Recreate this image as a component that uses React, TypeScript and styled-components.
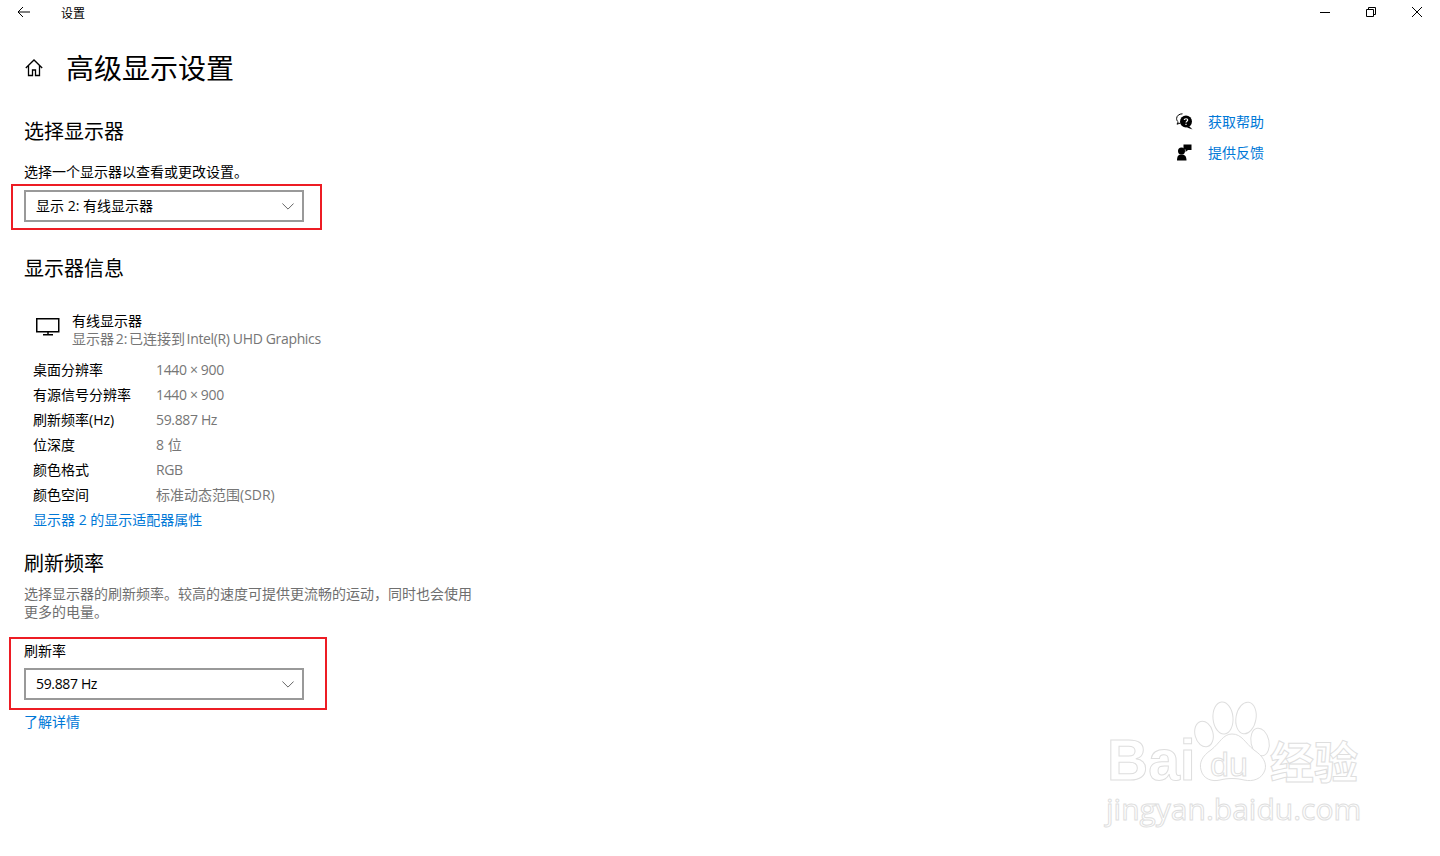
import React from 'react'
import styled, { createGlobalStyle } from 'styled-components'

const GlobalStyle = createGlobalStyle`
  html, body {
    margin: 0;
    padding: 0;
    background: #fff;
  }
  body {
    font-family: "Open Sans", "Noto Sans CJK SC", sans-serif;
    font-size: 14px;
    color: #000;
  }
`

const Page = styled.div`
  position: relative;
  width: 1440px;
  height: 856px;
  overflow: hidden;
  background: #fff;
`

const TitleBar = styled.div`
  display: flex;
  align-items: center;
  height: 24px;
`

const BackButton = styled.div`
  display: flex;
  align-items: center;
  justify-content: center;
  width: 48px;
  height: 24px;
`

const AppName = styled.span`
  flex: 1;
  margin-left: 13px;
  padding-top: 3px;
  font-size: 12px;
  line-height: 24px;
`

const WindowButton = styled.div`
  display: flex;
  align-items: center;
  justify-content: center;
  width: 46px;
  height: 24px;
`

const Content = styled.div`
  display: grid;
  grid-template-columns: 1176px 1fr;
`

const Main = styled.main`
  padding-left: 24px;
`

const TitleRow = styled.div`
  display: flex;
  align-items: center;
  margin-top: 24px;
  height: 40px;
`

const HomeIcon = styled.div`
  display: flex;
  width: 42px;
  padding-left: 1px;
  box-sizing: border-box;
`

const Title = styled.h1`
  margin: 0;
  font-size: 28px;
  line-height: 40px;
  font-weight: 400;
`

const Heading = styled.h2<{ $top: number }>`
  margin: ${(p) => p.$top}px 0 0;
  font-size: 20px;
  line-height: 28px;
  font-weight: 400;
`

const Text = styled.div<{ $top: number }>`
  margin-top: ${(p) => p.$top}px;
  line-height: 20px;
`

const Latin = styled.span`
  letter-spacing: -0.35px;
  word-spacing: 0;
`

const Paragraph = styled.p`
  margin: 7px 0 0;
  width: 456px;
  line-height: 18px;
  color: #6f6f6f;
`

const SelectBox = styled.div<{ $top: number }>`
  display: flex;
  align-items: center;
  justify-content: space-between;
  box-sizing: border-box;
  width: 280px;
  height: 32px;
  margin-top: ${(p) => p.$top}px;
  padding: 0 8px 2px 10px;
  border: 2px solid #999;
`

const Chevron = styled.svg`
  display: block;
  margin-top: 2px;
  color: #666;
`

const RedMark = styled.div<{ $l: number; $t: number; $w: number; $h: number }>`
  position: absolute;
  left: ${(p) => p.$l}px;
  top: ${(p) => p.$t}px;
  width: ${(p) => p.$w}px;
  height: ${(p) => p.$h}px;
  box-sizing: border-box;
  border: 2px solid #ed1c24;
  pointer-events: none;
`

const DeviceRow = styled.div`
  display: flex;
  margin-top: 29px;
  padding-left: 12px;
  line-height: 18px;
`

const DeviceIcon = styled.div`
  width: 36px;
  padding-top: 6px;
`

const Muted = styled.div`
  color: #767676;
  word-spacing: -2px;
`

const InfoList = styled.div`
  margin-top: 9px;
  padding-left: 9px;
`

const InfoRow = styled.div`
  display: grid;
  grid-template-columns: 123px 1fr;
  height: 25px;
  line-height: 25px;
`

const Value = styled.span`
  color: #767676;
`

const Link = styled.a<{ $top?: number }>`
  display: block;
  margin-top: ${(p) => p.$top ?? 0}px;
  color: #0078d7;
  line-height: 25px;
  text-decoration: none;
`

const Aside = styled.aside`
  display: flex;
  flex-direction: column;
  gap: 11px;
  padding-top: 87px;
`

const HelpRow = styled.div`
  display: flex;
  align-items: center;
  height: 20px;
  gap: 15px;
  color: #0078d7;
`

const Watermark = styled.div`
  position: absolute;
  left: 1104px;
  top: 698px;
  width: 262px;
  height: 130px;
  color: #fff;
  pointer-events: none;
  -webkit-text-stroke: 1px #dedede;
`

const Brand = styled.span`
  position: absolute;
  left: 3px;
  top: 32px;
  font-family: "Liberation Sans", sans-serif;
  font-size: 57px;
  font-weight: 700;
  line-height: 60px;
`

const BrandInner = styled.span`
  position: absolute;
  left: 106px;
  top: 50px;
  font-family: "Liberation Sans", sans-serif;
  font-size: 34px;
  line-height: 32px;
`

const BrandCn = styled.span`
  position: absolute;
  left: 166px;
  top: 32px;
  font-family: "Noto Sans CJK SC", sans-serif;
  font-size: 44px;
  font-weight: 700;
  line-height: 60px;
  white-space: nowrap;
`

const Domain = styled.span`
  position: absolute;
  left: 2px;
  top: 94px;
  font-family: "Open Sans", sans-serif;
  font-size: 30px;
  line-height: 34px;
  white-space: nowrap;
`

const Paw = styled.svg`
  position: absolute;
  left: 90px;
  top: 0;
`

const Ln = ({ d, w = 1 }: { d: string; w?: number }) => (
  <path d={d} fill="none" stroke="currentColor" strokeWidth={w} />
)

const Select = ({ top, children }: { top: number; children: React.ReactNode }) => (
  <SelectBox $top={top}>
    <span>{children}</span>
    <Chevron width="12" height="7" viewBox="0 0 12 7">
      <Ln d="M.400.500 6 6.100 11.600.500" />
    </Chevron>
  </SelectBox>
)

const rows: [string, React.ReactNode][] = [
  ['桌面分辨率', <Latin>1440 × 900</Latin>],
  ['有源信号分辨率', <Latin>1440 × 900</Latin>],
  ['刷新频率(Hz)', <Latin>59.887 Hz</Latin>],
  ['位深度', '8 位'],
  ['颜色格式', <Latin>RGB</Latin>],
  ['颜色空间', '标准动态范围(SDR)'],
]

export default function App() {
  return (
    <Page>
      <GlobalStyle />
      <TitleBar>
        <BackButton>
          <svg width="14" height="12" viewBox="0 0 14 12">
            <Ln d="M13 6H1M6 1 1 6l5 5" />
          </svg>
        </BackButton>
        <AppName>设置</AppName>
        <WindowButton>
          <svg width="10" height="10" viewBox="0 0 10 10">
            <Ln d="M0 5.500h10" />
          </svg>
        </WindowButton>
        <WindowButton>
          <svg width="10" height="10" viewBox="0 0 10 10">
            <Ln d="M.500 2.500h7v7h-7zM2.500 2.500v-2h7v7h-2" />
          </svg>
        </WindowButton>
        <WindowButton>
          <svg width="10" height="10" viewBox="0 0 10 10">
            <Ln d="M0 0l10 10M10 0 0 10" />
          </svg>
        </WindowButton>
      </TitleBar>
      <Content>
        <Main>
          <TitleRow>
            <HomeIcon>
              <svg width="18" height="18" viewBox="0 0 18 18">
                <Ln d="M.800 9 9 1 17.200 9M3.500 6.500v10h4V11h3v5.500h4v-10" w={1.3} />
              </svg>
            </HomeIcon>
            <Title>高级显示设置</Title>
          </TitleRow>
          <Heading $top={30}>选择显示器</Heading>
          <Text $top={16}>选择一个显示器以查看或更改设置。</Text>
          <Select top={8}>显示 2: 有线显示器</Select>
          <Heading $top={33}>显示器信息</Heading>
          <DeviceRow>
            <DeviceIcon>
              <svg width="24" height="18" viewBox="0 0 24 18">
                <Ln d="M.750.750h22v13h-22z" w={1.5} />
                <Ln d="M12 14v2.500M7 16.800h10" w={1.5} />
              </svg>
            </DeviceIcon>
            <div>
              <div>有线显示器</div>
              <Muted>
                显示器 2: 已连接到 <Latin>Intel(R) UHD Graphics</Latin>
              </Muted>
            </div>
          </DeviceRow>
          <InfoList>
            {rows.map(([k, v]) => (
              <InfoRow key={k}>
                <span>{k}</span>
                <Value>{v}</Value>
              </InfoRow>
            ))}
            <Link>显示器 2 的显示适配器属性</Link>
          </InfoList>
          <Heading $top={18}>刷新频率</Heading>
          <Paragraph>选择显示器的刷新频率。较高的速度可提供更流畅的运动，同时也会使用更多的电量。</Paragraph>
          <Text $top={20}>刷新率</Text>
          <Select top={7}>
            <Latin>59.887 Hz</Latin>
          </Select>
          <Link $top={9}>了解详情</Link>
        </Main>
        <Aside>
          <HelpRow>
            <svg width="17" height="17" viewBox="0 0 17 17">
              <path d="M6.500 .800C3.200 .800 .600 2.800 .600 5.600c0 1.400.600 2.500 1.600 3.300L1 11.200l3.500-1.200" fill="none" stroke="#000" />
              <circle cx="10" cy="8.500" r="6" fill="#000" />
              <path d="M13 13l3.500 3.500-5.500-2z" fill="#000" />
              <path d="M8.200 7c.2-1.700 3.500-1.700 3.500 0 0 1.200-1.700 1.200-1.700 2.600M10 10.800V12" fill="none" stroke="#fff" strokeWidth="1.200" />
            </svg>
            <span>获取帮助</span>
          </HelpRow>
          <HelpRow>
            <svg width="17" height="17" viewBox="0 0 17 17">
              <circle cx="5.500" cy="7" r="3.500" fill="#000" />
              <path d="M1 16.500c0-4.500 1.500-6 4.500-6s5 1.500 5 6z" fill="#000" />
              <path d="M7.500 .500h8v5.500h-3.500L9.500 8V5.500H7.500z" fill="#000" />
            </svg>
            <span>提供反馈</span>
          </HelpRow>
        </Aside>
      </Content>
      <RedMark $l={11} $t={184} $w={311} $h={46} />
      <RedMark $l={9} $t={637} $w={318} $h={73} />
      <Watermark>
        <Paw width="80" height="90" viewBox="0 0 80 90" fill="#fff" stroke="#dedede" strokeWidth="1">
          <ellipse cx="10" cy="36" rx="9" ry="13" transform="rotate(-15 10 36)" />
          <ellipse cx="29" cy="20" rx="10" ry="16" transform="rotate(-5 29 20)" />
          <ellipse cx="52" cy="20" rx="10" ry="16" transform="rotate(10 52 20)" />
          <ellipse cx="66" cy="44" rx="9" ry="14" transform="rotate(-12 66 44)" />
          <path d="M38 36c-9 0-12 9-21 16C8 58 5 65 7 72c2 9 11 12 19 10 8-2 16-2 24 0 9 2 18-1 21-10 2-7-2-14-11-20-9-7-12-16-22-16z" />
        </Paw>
        <Brand>Bai</Brand>
        <BrandInner>du</BrandInner>
        <BrandCn>经验</BrandCn>
        <Domain>jingyan.baidu.com</Domain>
      </Watermark>
    </Page>
  )
}
